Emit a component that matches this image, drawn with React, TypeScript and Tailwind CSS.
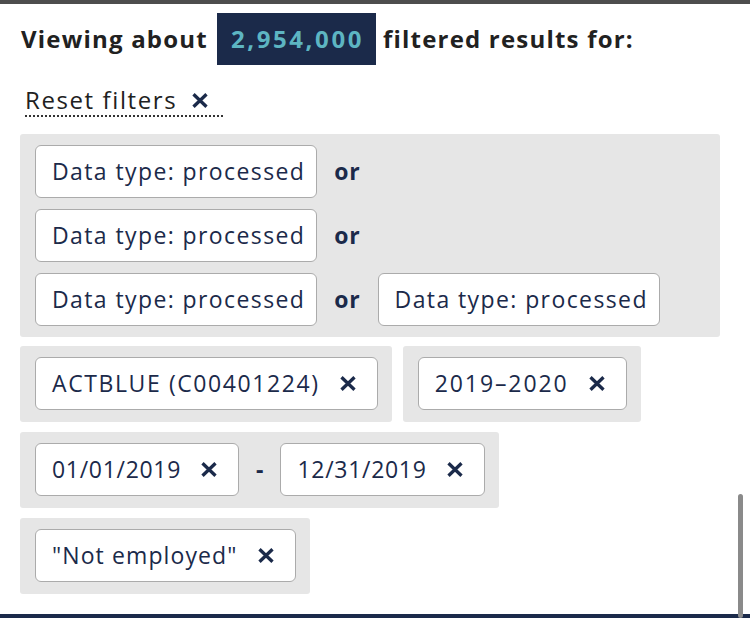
import React from "react";

const X = () => (
  <svg width="16" height="15" viewBox="0 0 16 15" className="shrink-0">
    <path d="M1.5 1.2 L14.5 13.8 M14.5 1.2 L1.5 13.8" stroke="#1b2a4a" strokeWidth="3.3" strokeLinecap="butt" />
  </svg>
);

const Pill = ({ text, x = false, track = "tracking-[1.4px]" }: { text: string; x?: boolean; track?: string }) => (
  <div
    className={`flex h-[53px] items-center rounded-[6px] border border-[#ababab] bg-white pl-[16px] ${
      x ? "pr-[21px] gap-[20px]" : "pr-[11px]"
    } text-[23px] ${track} text-[#1b2a4a]`}
  >
    <span>{text}</span>
    {x && <X />}
  </div>
);

const Group = ({ children }: { children: React.ReactNode }) => (
  <div className="flex items-center rounded-[3px] bg-[#e6e6e6] pl-[15px] pr-[14px] pt-[11px] pb-[12px]">{children}</div>
);

const Or = () => <span className="px-[17px] text-[23px] font-bold tracking-[0.8px] text-[#1b2a4a]">or</span>;

export default function App() {
  return (
    <div
      className="relative flex h-[618px] w-[750px] flex-col overflow-hidden bg-white"
      style={{ fontFamily: '"Open Sans", sans-serif' }}
    >
      <div className="h-[4px] w-full bg-[#4d4d4d]" />
      <div className="flex items-center pl-[21px] pt-[9px]">
        <span className="text-[24px] font-bold tracking-[1.2px] text-[#212121]">Viewing about</span>
        <span className="ml-[9px] flex h-[52px] items-center bg-[#1b2a4a] pl-[14px] pr-[12px] text-[24px] font-bold tracking-[2.6px] text-[#5db5c2]">
          2,954,000
        </span>
        <span className="ml-[7px] text-[24px] font-bold tracking-[1.2px] text-[#212121]">filtered results for:</span>
      </div>
      <div className="mt-[20px] flex pl-[25px]">
        <div className="flex items-center gap-[15px] border-b-2 border-dotted border-[#333] pr-[15px] text-[24px] leading-[30px] tracking-[1.6px] text-[#212121]">
          <span>Reset filters</span>
          <X />
        </div>
      </div>
      <div className="mt-[17px] flex flex-col items-start gap-[10px] pl-[20px] pr-[30px]">
        <div className="mb-[-1px] flex w-[700px] flex-col items-start gap-[11px] rounded-[3px] bg-[#e6e6e6] pl-[15px] pr-[14px] pt-[11px] pb-[11px]">
          <div className="flex items-center">
            <Pill text="Data type: processed" />
            <Or />
          </div>
          <div className="flex items-center">
            <Pill text="Data type: processed" />
            <Or />
          </div>
          <div className="flex items-center">
            <Pill text="Data type: processed" />
            <Or />
            <Pill text="Data type: processed" />
          </div>
        </div>
        <div className="flex gap-[11px]">
          <Group>
            <Pill text="ACTBLUE (C00401224)" x track="tracking-[1.6px]" />
          </Group>
          <Group>
            <Pill text="2019–2020" x track="tracking-[1.9px]" />
          </Group>
        </div>
        <Group>
          <Pill text="01/01/2019" x track="tracking-[0.7px]" />
          <span className="px-[17px] text-[23px] font-bold text-[#1b2a4a]">-</span>
          <Pill text="12/31/2019" x track="tracking-[0.7px]" />
        </Group>
        <Group>
          <Pill text={'"Not employed"'} x track="tracking-[1.1px]" />
        </Group>
      </div>
      <div className="absolute bottom-0 left-0 h-[4px] w-full bg-[#1b2a4a]" />
      <div className="absolute right-[7px] top-[494px] h-[124px] w-[5px] rounded-full bg-[#8a8a8a]" />
    </div>
  );
}
